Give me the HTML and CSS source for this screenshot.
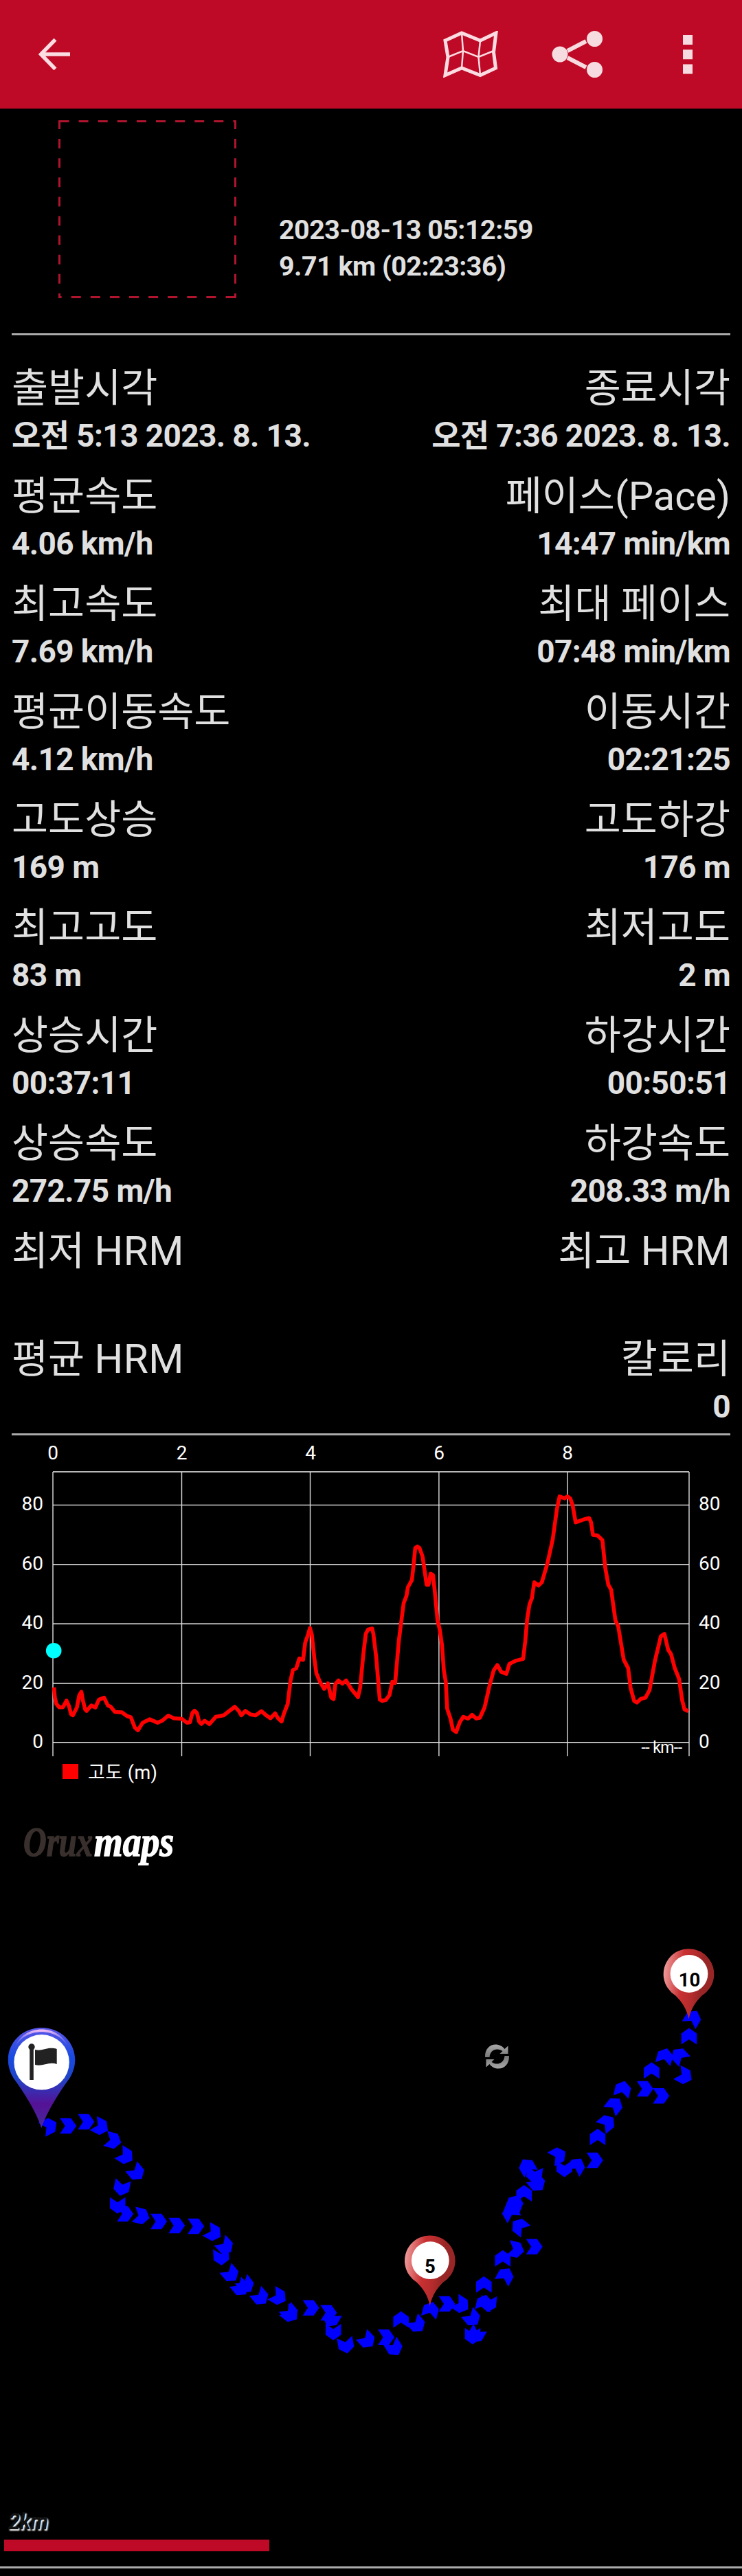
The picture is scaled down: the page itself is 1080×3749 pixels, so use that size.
FILE: index.html
```html
<!DOCTYPE html>
<html lang="ko">
<head>
<meta charset="utf-8">
<title>Oruxmaps</title>
<link rel="stylesheet" href="styles.css">
</head>
<body>
<header class="topbar">
  <svg class="icon-back" viewBox="0 0 46 46"><path d="M46 23H4M24.500 1.500L3.500 23L24.500 44.500"/></svg>
  <nav class="actions">
    <svg class="icon-map" viewBox="0 0 80 68">
      <path class="thick" d="M3 14L27 3L54 14L77 3L73.500 31L76.500 54L54 64.500L27 54L3 64.500L7 38Z"/>
      <path d="M27 3L29 29L27 54M54 14L51.500 38L54 64.500M7 38L29 29L51.500 38L73.500 29"/>
    </svg>
    <svg class="icon-share" viewBox="0 0 74 68"><path d="M23 29L50 15M23 39L50 53"/><circle cx="12" cy="34" r="11.500"/><circle cx="62.500" cy="11.500" r="11.500"/><circle cx="62.500" cy="56.500" r="11.500"/></svg>
    <svg class="icon-more" viewBox="0 0 14 57"><path d="M0 0h14v14H0zM0 21.200h14v14H0zM0 42.500h14v14H0z"/></svg>
  </nav>
</header>

<section class="summary">
  <svg class="photo" viewBox="0 0 259 259"><path d="M1.500 1.500H257.500M257.500 257.500H1.500"/><path class="side" d="M1.500 0V259M257.500 0V259"/></svg>
  <div class="summary-text"><div>2023-08-13 05:12:59</div><div>9.71 km (02:23:36)</div></div>
</section>
<hr class="rule">

<section class="stats">
  <div class="stat"><p>출발시각</p><b>오전 5:13 2023. 8. 13.</b></div><div class="stat end"><p>종료시각</p><b>오전 7:36 2023. 8. 13.</b></div>
  <div class="stat"><p>평균속도</p><b>4.06 km/h</b></div><div class="stat end"><p>페이스(Pace)</p><b>14:47 min/km</b></div>
  <div class="stat"><p>최고속도</p><b>7.69 km/h</b></div><div class="stat end"><p>최대 페이스</p><b>07:48 min/km</b></div>
  <div class="stat"><p>평균이동속도</p><b>4.12 km/h</b></div><div class="stat end"><p>이동시간</p><b>02:21:25</b></div>
  <div class="stat"><p>고도상승</p><b>169 m</b></div><div class="stat end"><p>고도하강</p><b>176 m</b></div>
  <div class="stat"><p>최고고도</p><b>83 m</b></div><div class="stat end"><p>최저고도</p><b>2 m</b></div>
  <div class="stat"><p>상승시간</p><b>00:37:11</b></div><div class="stat end"><p>하강시간</p><b>00:50:51</b></div>
  <div class="stat"><p>상승속도</p><b>272.75 m/h</b></div><div class="stat end"><p>하강속도</p><b>208.33 m/h</b></div>
  <div class="stat"><p>최저 <span>HRM</span></p></div><div class="stat end"><p>최고 <span>HRM</span></p></div>
  <div class="stat"><p>평균 <span>HRM</span></p></div><div class="stat end"><p>칼로리</p><b>0</b></div>
</section>
<hr class="rule">

<svg class="chart" viewBox="0 2089 1080 511">
  <g class="grid">
    <path d="M77 2142H1003M77 2190.400H1003M77 2277H1003M77 2363.300H1003M77 2449.700H1003M77 2536H1003"/>
    <path class="vertical" d="M77 2142V2556M264.500 2142V2556M451.500 2142V2556M638.900 2142V2556M825.900 2142V2556M1003 2142V2556"/>
  </g>
  <g class="axis mid"><text x="77" y="2123.500">0</text><text x="264.500" y="2123.500">2</text><text x="452" y="2123.500">4</text><text x="639" y="2123.500">6</text><text x="826" y="2123.500">8</text></g>
  <g class="axis right"><text x="63" y="2197.500">80</text><text x="63" y="2284.500">60</text><text x="63" y="2370.500">40</text><text x="63" y="2457.500">20</text><text x="63" y="2543.500">0</text></g>
  <g class="axis"><text x="1017" y="2197.500">80</text><text x="1017" y="2284.500">60</text><text x="1017" y="2370.500">40</text><text x="1017" y="2457.500">20</text><text x="1017" y="2543.500">0</text></g>
  <text class="unit" x="933.500" y="2550.500" textLength="59.500">-- km--</text>
  <g transform="translate(0 2060) scale(.34439 .35714)">
    <polyline class="profile" points="228,1108 232,1150 238,1175 250,1189 266,1189 281,1162 292,1185 300,1217 308,1222 325,1190 335,1140 344,1126 350,1160 360,1198 366,1204 386,1182 403,1190 418,1158 440,1150 456,1182 468,1187 486,1208 516,1210 537,1225 553,1230 570,1272 583,1283 603,1252 632,1238 666,1252 685,1244 711,1223 735,1234 768,1236 790,1252 803,1250 813,1212 822,1203 832,1212 842,1248 851,1257 865,1244 885,1258 912,1228 945,1222 992,1187 1010,1205 1020,1222 1037,1204 1060,1219 1080,1222 1105,1205 1125,1222 1143,1234 1163,1214 1175,1234 1190,1247 1200,1215 1216,1175 1228,1080 1238,1038 1252,1030 1265,990 1281,996 1290,925 1302,893 1310,866 1318,893 1328,985 1337,1050 1352,1085 1370,1114 1386,1092 1400,1150 1410,1156 1417,1095 1430,1080 1447,1093 1463,1080 1485,1115 1513,1148 1522,1110 1536,970 1546,890 1556,872 1573,868 1578,890 1590,985 1605,1158 1616,1163 1630,1160 1646,1140 1658,1085 1670,1090 1686,915 1706,765 1718,735 1724,700 1741,670 1748,610 1755,540 1764,534 1773,540 1786,575 1803,690 1811,690 1820,645 1830,650 1838,720 1849,835 1858,870 1868,935 1876,1040 1884,1085 1890,1195 1904,1235 1914,1280 1928,1290 1943,1250 1958,1228 1978,1235 1995,1220 2013,1235 2028,1232 2048,1190 2068,1105 2086,1040 2102,1017 2118,1045 2140,1053 2153,1012 2178,1000 2211,992 2220,920 2228,830 2238,770 2248,745 2258,680 2276,693 2290,680 2313,605 2336,505 2354,380 2365,330 2386,338 2398,330 2410,338 2420,365 2433,436 2463,425 2490,418 2498,435 2506,487 2526,489 2546,508 2558,620 2571,690 2583,710 2601,835 2613,860 2636,995 2655,1030 2665,1110 2680,1163 2692,1170 2708,1155 2728,1150 2745,1120 2768,1000 2793,900 2808,890 2824,955 2836,972 2852,1030 2870,1073 2883,1160 2893,1198 2910,1205"/>
  </g>
  <circle class="cursor" cx="78.200" cy="2402.300" r="11.300"/>
  <rect class="key" x="91" y="2567" width="23" height="22"/>
  <text class="legend" x="128" y="2588.500" textLength="101">고도 (m)</text>
</svg>

<svg class="map" viewBox="0 2600 1080 1135">
  <defs>
    <path id="a" d="M-12 -11.300H4L12 0L4 11.300H-12L-4.500 0Z"/>
    <linearGradient id="blue" x1="0" y1="0" x2="0" y2="1"><stop offset="0" stop-color="#5a55e8"/><stop offset=".3" stop-color="#184ae0"/><stop offset=".5" stop-color="#2044c8"/><stop offset=".76" stop-color="#551296"/><stop offset="1" stop-color="#45289a"/></linearGradient>
    <linearGradient id="pink" x1="0" y1="0" x2="0" y2="1"><stop offset="0" stop-color="#ffc4f6"/><stop offset="1" stop-color="#6a70f0" stop-opacity="0"/></linearGradient>
    <linearGradient id="red" x1="0" y1=".35" x2="1" y2=".5"><stop offset="0" stop-color="#ef9a9a"/><stop offset=".36" stop-color="#c93032"/><stop offset=".6" stop-color="#b32b2c"/><stop offset=".75" stop-color="#982626"/></linearGradient>
    <linearGradient id="gray" x1="0" y1="0" x2="0" y2="1"><stop offset="0" stop-color="#a8a8a8"/><stop offset="1" stop-color="#777"/></linearGradient>
    <g id="pin"><path fill="url(#red)" d="M0 1C-3 -14 -10 -24 -19 -33A36.800 36.800 0 1 1 19 -33C10 -24 3 -14 0 1Z"/><circle cx=".5" cy="-65" r="27.400" fill="#fff"/></g>
  </defs>
  <text class="logo dim" x="34" y="2701" textLength="101" lengthAdjust="spacingAndGlyphs">Orux</text>
  <text class="logo" x="137" y="2701" textLength="116" lengthAdjust="spacingAndGlyphs">maps</text>
  <g class="track">
    <use href="#a" transform="translate(71.6 3094.3) rotate(-27)"/><use href="#a" transform="translate(99.200 3094)"/><use href="#a" transform="translate(125.400 3088)"/><use href="#a" transform="translate(146.400 3095.300) rotate(27)"/><use href="#a" transform="translate(164.800 3115.300) rotate(15)"/><use href="#a" transform="translate(182.600 3137.900) rotate(32)"/><use href="#a" transform="translate(198.600 3161.900) rotate(50)"/><use href="#a" transform="translate(177.100 3184) rotate(102)"/><use href="#a" transform="translate(171.200 3209.700) rotate(90)"/><use href="#a" transform="translate(182.200 3222)"/>
    <use href="#a" transform="translate(206 3225.400) rotate(14)"/><use href="#a" transform="translate(231.100 3233)"/><use href="#a" transform="translate(257.300 3239)"/><use href="#a" transform="translate(285.200 3240)"/><use href="#a" transform="translate(310.700 3249.800) rotate(29)"/><use href="#a" transform="translate(328 3269) rotate(47)"/><use href="#a" transform="translate(322 3285) rotate(87)"/><use href="#a" transform="translate(335.800 3309.700) rotate(50)"/><use href="#a" transform="translate(350.300 3330) rotate(50)"/><use href="#a" transform="translate(358 3326) rotate(53)"/>
    <use href="#a" transform="translate(379.200 3343.300) rotate(50)"/><use href="#a" transform="translate(405.400 3342.800) rotate(30)"/><use href="#a" transform="translate(422.200 3366.400) rotate(50)"/><use href="#a" transform="translate(422.600 3368) rotate(38)"/><use href="#a" transform="translate(452.600 3358.700)"/><use href="#a" transform="translate(478.400 3366)"/><use href="#a" transform="translate(482 3375) rotate(120)"/><use href="#a" transform="translate(485.200 3394) rotate(90)"/><use href="#a" transform="translate(503.500 3413.200) rotate(80)"/><use href="#a" transform="translate(534.200 3406) rotate(47)"/>
    <use href="#a" transform="translate(562.100 3401.600)"/><use href="#a" transform="translate(574 3417) rotate(58)"/><use href="#a" transform="translate(583.700 3375.700) rotate(-90)"/><use href="#a" transform="translate(607.200 3383.200) rotate(50)"/><use href="#a" transform="translate(626.900 3361.500) rotate(-75)"/><use href="#a" transform="translate(650.500 3353)"/><use href="#a" transform="translate(671.300 3354.500) rotate(33)"/><use href="#a" transform="translate(687.400 3374) rotate(50)"/><use href="#a" transform="translate(688 3400) rotate(90)"/><use href="#a" transform="translate(693 3398) rotate(120)"/>
    <use href="#a" transform="translate(711 3353) rotate(95)"/><use href="#a" transform="translate(705 3351.400) rotate(-77)"/><use href="#a" transform="translate(704.300 3324.700) rotate(-90)"/><use href="#a" transform="translate(735.700 3311.700) rotate(-61)"/><use href="#a" transform="translate(731.800 3286.700) rotate(-90)"/><use href="#a" transform="translate(751.200 3274) rotate(13)"/><use href="#a" transform="translate(777.700 3269.800)"/><use href="#a" transform="translate(756 3240.200) rotate(-141)"/><use href="#a" transform="translate(742.700 3219.600) rotate(-120)"/><use href="#a" transform="translate(749.700 3206.100) rotate(-68)"/>
    <use href="#a" transform="translate(762.800 3192) rotate(-90)"/><use href="#a" transform="translate(782 3178) rotate(50)"/><use href="#a" transform="translate(777.600 3165.300) rotate(98)"/><use href="#a" transform="translate(767 3153) rotate(-120)"/><use href="#a" transform="translate(812.400 3137) rotate(-28)"/><use href="#a" transform="translate(821.400 3156.600) rotate(90)"/><use href="#a" transform="translate(839.700 3152) rotate(-60)"/><use href="#a" transform="translate(865.800 3144)"/><use href="#a" transform="translate(869.900 3110) rotate(-90)"/><use href="#a" transform="translate(883.600 3089.400) rotate(-40)"/>
    <use href="#a" transform="translate(894.600 3063.800) rotate(-52)"/><use href="#a" transform="translate(906.500 3040.300) rotate(-77)"/><use href="#a" transform="translate(938.900 3040)"/><use href="#a" transform="translate(962.300 3050.200)"/><use href="#a" transform="translate(948.400 3013.200) rotate(-90)"/><use href="#a" transform="translate(967.800 2992.500) rotate(-75)"/><use href="#a" transform="translate(988.600 2991.800) rotate(-133)"/><use href="#a" transform="translate(996 3021.400) rotate(28)"/><use href="#a" transform="translate(1002.900 2963.400) rotate(-90)"/><use href="#a" transform="translate(1008.500 2937) rotate(-60)"/>
  </g>
  <path fill="url(#blue)" d="M60.300 3097C52 3071 33 3043 20 3025C-2 2990 23 2951 60.600 2951S123 2990 101 3025C88 3043 69 3071 60.300 3097Z"/>
  <path fill="url(#pink)" d="M21 2982C32 2944 89 2944 100 2982C87 2949 34 2949 21 2982Z"/>
  <circle cx="60.600" cy="3001.300" r="40.200" fill="#fff"/>
  <g fill="#222"><circle cx="46" cy="2979" r="4.700"/><path d="M43.200 2979H48.800V3027H43.200ZM51 2983C62 2986 68 2978 82.700 2982V3004C71 3000 62 3008 51 3005Z"/></g>
  <use href="#pin" x="1002.500" y="2937.500"/><use href="#pin" x="625.800" y="3354.700"/>
  <text class="pin-label" x="1003.500" y="2891">10</text><text class="pin-label" x="626" y="3308">5</text>
  <g fill="url(#gray)" transform="translate(723.500 2993)"><path id="r" d="M-17.500 1C-18 -20 3 -22 11 -11L16 -15.500V-4H4L8 -8C1 -13 -10 -11 -11 1Z"/><use href="#r" transform="rotate(180)"/></g>
  <text class="scale-label" x="12" y="3681" textLength="58" lengthAdjust="spacingAndGlyphs">2km</text>
  <rect class="scale-bar" x="6" y="3696" width="386" height="17"/>
</svg>
<hr class="rule full">
</body>
</html>
```
FILE: styles.css
```css
* { box-sizing: border-box; }
body { margin: 0; width: 1080px; height: 3749px; background: #000; color: #e0e0e0; font-family: Roboto, "Noto Sans CJK KR", sans-serif; overflow-x: hidden; }
svg { display: block; }
p { margin: 0; }

.topbar { height: 158px; padding: 0 72px 0 56px; display: flex; align-items: center; justify-content: space-between; background: #be0a26; }
.icon-back { width: 46px; height: 46px; fill: none; stroke: #fadce2; stroke-width: 5.5; }
.actions { display: flex; align-items: center; }
.icon-map { width: 80px; height: 68px; fill: none; stroke: #fadce2; stroke-width: 2.5; }
.icon-map .thick { stroke-width: 5; }
.icon-share { width: 74px; height: 68px; margin-left: 78px; fill: #f6dce0; }
.icon-share path { stroke: #f6dce0; stroke-width: 6; }
.icon-more { width: 14px; height: 57px; margin-left: 117px; fill: #f6dce0; }

.summary { height: 327px; padding: 17px 0 0 85px; display: flex; }
.photo { width: 259px; height: 259px; fill: none; stroke: #b0152d; stroke-width: 3; stroke-dasharray: 14 14.1; }
.photo .side { stroke-dashoffset: 1; }
.summary-text { margin: 133px 0 0 62px; font-weight: 700; font-size: 39.4px; line-height: 53px; letter-spacing: -.5px; }
.rule { width: 1046px; height: 3px; margin: 0 17px; border: 0; background: #aaa; }
.rule.full { width: 1080px; margin: 0; }

.stats { height: 1598px; padding: 28px 17px 0; display: grid; grid-template-columns: 1fr 1fr; grid-auto-rows: 157px; }
.stat p { padding-top: 11px; font-size: 57.7px; line-height: 76px; }
.stat p span { font-size: 58.6px; line-height: 1; letter-spacing: .4px; }
.stat b { display: block; padding-top: 1px; font-size: 46px; line-height: 60px; font-weight: 700; letter-spacing: -.62px; }
.end { text-align: right; }

.chart { width: 1080px; height: 511px; }
.grid path { fill: none; stroke: #f4f4f4; stroke-width: 1.4; }
.grid .vertical { stroke: #ddd; }
.axis { font-size: 28px; fill: #fff; }
.mid { text-anchor: middle; }
.right { text-anchor: end; }
.unit { font-size: 23px; fill: #fff; }
.profile { fill: none; stroke: #f00; stroke-width: 5.6; stroke-linejoin: round; vector-effect: non-scaling-stroke; }
.cursor { fill: #0ff; }
.key { fill: #f00; }
.legend { font-size: 27px; fill: #fff; }

.map { width: 1080px; height: 1135px; }
.logo { font: italic bold 61px "Liberation Serif", serif; fill: #fff; stroke: #fff; stroke-width: 1.5; }
.logo.dim { fill: #39302d; stroke: #39302d; }
.track { fill: #00f; }
.pin-label { font-size: 27.5px; font-weight: 700; fill: #000; text-anchor: middle; }
.scale-label { font-size: 33px; font-style: italic; font-weight: 700; fill: #111; text-shadow: 2px 2px 2px #fff; }
.scale-bar { fill: #be0a26; }
```
